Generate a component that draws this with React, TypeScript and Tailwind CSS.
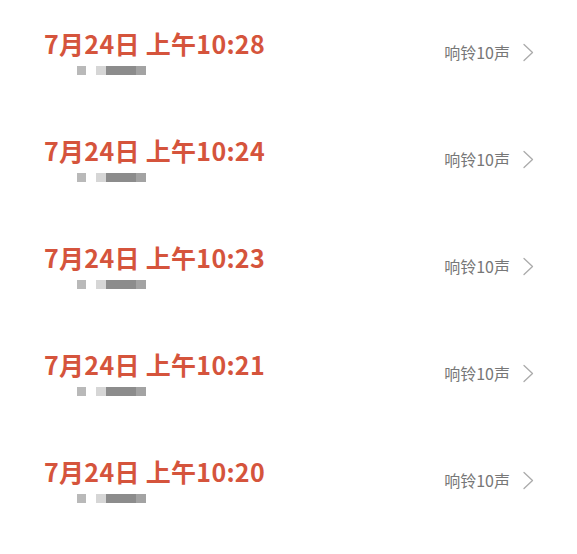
import React from "react";

const calls = [
  { time: "7月24日 上午10:28", rings: "响铃10声" },
  { time: "7月24日 上午10:24", rings: "响铃10声" },
  { time: "7月24日 上午10:23", rings: "响铃10声" },
  { time: "7月24日 上午10:21", rings: "响铃10声" },
  { time: "7月24日 上午10:20", rings: "响铃10声" },
];

function Chevron() {
  return (
    <svg width="12" height="19" viewBox="0 0 12 19" fill="none">
      <polyline
        points="2,1.5 10.5,9.5 2,17.5"
        stroke="#ababab"
        strokeWidth="1.3"
        strokeLinecap="round"
        strokeLinejoin="round"
      />
    </svg>
  );
}

function CallRow({ time, rings }) {
  return (
    <div className="flex h-[107px] items-start justify-between pl-[44px] pr-[43px]">
      <div className="flex flex-col">
        <div className="text-[25px] font-semibold leading-[30px] tracking-[0.3px] text-[#d5543c]">
          {time}
        </div>
        {/* blurred caller number */}
        <div className="mt-[8px] flex h-[9px] items-center pl-[33px]">
          <div className="h-[9px] w-[9px] bg-[#b9b9b9]" />
          <div className="ml-[10px] h-[9px] w-[10px] bg-[#d6d6d6]" />
          <div className="h-[9px] w-[30px] bg-[#8c8c8c]" />
          <div className="h-[9px] w-[10px] bg-[#a3a3a3]" />
        </div>
      </div>
      <div className="mt-[14px] flex items-center gap-[12px]">
        <span className="text-[16px] leading-[20px] text-[#777]">{rings}</span>
        <Chevron />
      </div>
    </div>
  );
}

export default function App() {
  return (
    <div
      className="min-h-[554px] bg-white pt-[28px]"
      style={{ fontFamily: '"Noto Sans CJK SC", "Noto Sans", sans-serif' }}
    >
      {calls.map((c, i) => (
        <CallRow key={i} time={c.time} rings={c.rings} />
      ))}
    </div>
  );
}
